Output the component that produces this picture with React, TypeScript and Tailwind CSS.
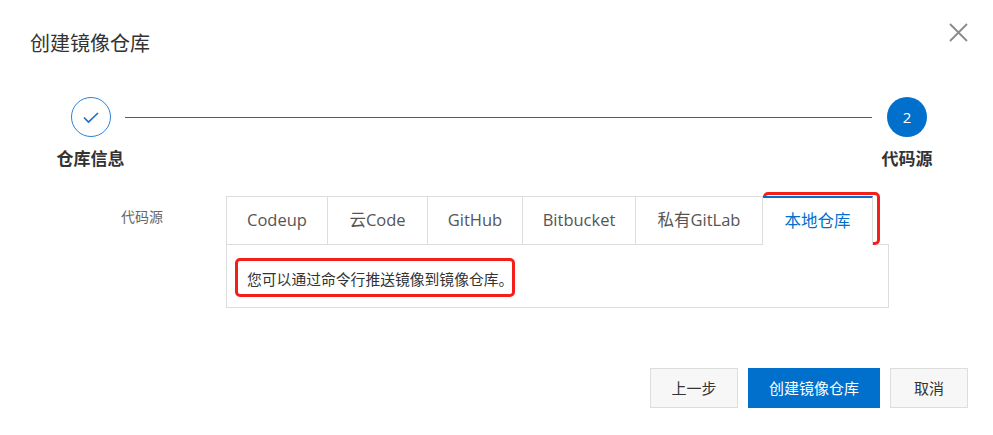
import React from "react";

const tabs = [
  { name: "Codeup", w: "w-[102px]" },
  { name: "云Code", w: "w-[100px]" },
  { name: "GitHub", w: "w-[95px]" },
  { name: "Bitbucket", w: "w-[113px]" },
  { name: "私有GitLab", w: "w-[127px]" },
  { name: "本地仓库", w: "w-[110px]", active: true },
];

export default function App() {
  return (
    <div className="relative h-[435px] w-[993px] bg-white font-['Open_Sans','Noto_Sans_CJK_SC',sans-serif] text-[#333]">
      <div className="flex items-start justify-between pl-[30px] pr-[24px]">
        <h1 className="mt-[31px] text-[20px] leading-[26px] font-normal">创建镜像仓库</h1>
        <button className="mt-[22px] text-[#8a8a8a]" aria-label="close">
          <svg width="21" height="21" viewBox="0 0 21 21" fill="none" stroke="currentColor" strokeWidth="1.8">
            <path d="M2 2 L19 19 M19 2 L2 19" />
          </svg>
        </button>
      </div>

      <div className="mt-[40px] flex pl-[56px] pr-[59px]">
        <div className="flex w-[69px] flex-col items-center">
          <div className="flex h-[40px] w-[40px] items-center justify-center rounded-full border border-[#2b82d6]">
            <svg width="18" height="13" viewBox="0 0 18 13" fill="none" stroke="#1f6fc0" strokeWidth="1.7">
              <path d="M2 6.5 L6.5 11 L16 2" />
            </svg>
          </div>
          <span className="mt-[12px] whitespace-nowrap text-[17px] leading-[20px] font-bold">仓库信息</span>
        </div>
        <div className="mt-[19.5px] mr-[8px] h-px flex-1 bg-[#2568ad]" />
        <div className="flex w-[54px] flex-col items-center">
          <div className="flex h-[40px] w-[40px] items-center justify-center rounded-full bg-[#0070cc] text-[15px] text-white">
            2
          </div>
          <span className="mt-[12px] whitespace-nowrap text-[17px] leading-[20px] font-bold">代码源</span>
        </div>
      </div>

      <div className="mt-[27px] flex">
        <div className="w-[226px] pl-[121px] pt-[11px] text-[14px] leading-[20px] text-[#666]">代码源</div>
        <div className="w-[663px]">
          <div className="flex h-[48px] items-start">
            {tabs.map((t, i) => (
              <div
                key={t.name}
                className={
                  t.active
                    ? `${t.w} relative z-10 flex h-[49px] items-center justify-center border-t-2 border-r border-t-[#0070cc] border-r-[#ddd] bg-white pb-px text-[16.5px] text-[#0070cc]`
                    : `${t.w} flex h-[48px] items-center justify-center border-t border-r border-[#ddd] text-[16.5px] text-[#555] ${i === 0 ? "border-l" : ""}`
                }
              >
                {t.name}
              </div>
            ))}
          </div>
          <div className="h-[64px] border border-[#ddd] pl-[20px] pt-[24px] text-[14.8px] leading-[20px] text-[#333]">
            您可以通过命令行推送镜像到镜像仓库。
          </div>
        </div>
      </div>

      <div className="mt-[60px] flex justify-end gap-[10px] pr-[25px] text-[15px]">
        <button className="h-[40px] w-[88px] border border-[#ddd] bg-[#f7f7f7] text-[#333]">上一步</button>
        <button className="h-[40px] w-[132px] bg-[#0070cc] text-white">创建镜像仓库</button>
        <button className="h-[40px] w-[78px] border border-[#ddd] bg-[#f7f7f7] text-[#333]">取消</button>
      </div>

      <div className="pointer-events-none absolute left-[763px] top-[192px] h-[53px] w-[117px] rounded-[5px] border-[3px] border-[#f51f1a]" />
      <div className="pointer-events-none absolute left-[235px] top-[258px] h-[39px] w-[280px] rounded-[5px] border-[3px] border-[#f51f1a]" />
    </div>
  );
}
